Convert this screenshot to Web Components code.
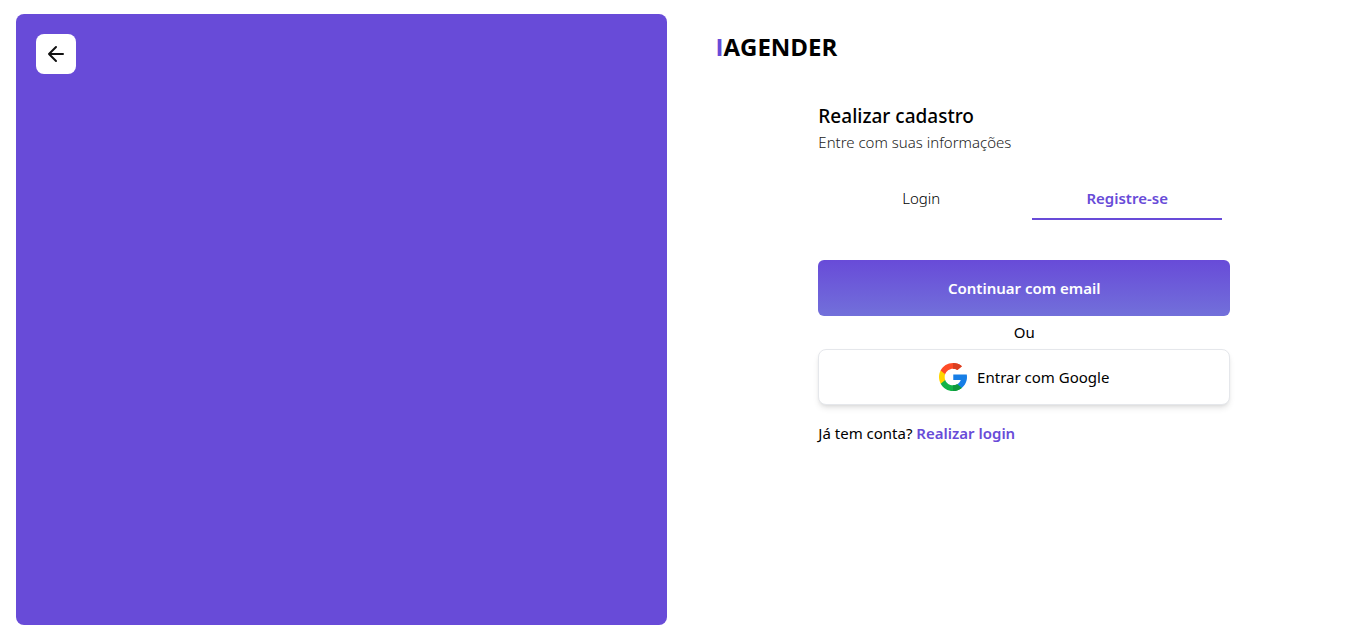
<!DOCTYPE html>
<html lang="pt-BR">
<head>
<meta charset="utf-8">
<meta name="viewport" content="width=device-width, initial-scale=1">
<title>IAGENDER</title>
<style>
  :root { --brand: #684bd8; --brand-soft: #7270da; }
  body { margin: 0; background: #fff; color: #000; font: 400 15px/24px "Segoe UI", "Noto Sans", "Open Sans", sans-serif; }
</style>
</head>
<body>
<auth-page>
  <back-button slot="cover"></back-button>
  <brand-logo slot="header" initial="I">AGENDER</brand-logo>
  <auth-form></auth-form>
</auth-page>

<template id="auth-page">
  <style>
    :host { display: grid; grid-template-columns: 1fr 1fr; min-height: 100vh; }
    .cover { margin: 14px 16px 11px; padding: 20px; border-radius: 8px; background: var(--brand); }
    main { padding: 31px 24px 32px 25px; }
    header { padding-left: 8px; margin-bottom: 40px; }
  </style>
  <aside class="cover"><slot name="cover"></slot></aside>
  <main>
    <header><slot name="header"></slot></header>
    <slot></slot>
  </main>
</template>

<template id="back-button">
  <style>
    :host { display: block; }
    button { display: flex; align-items: center; justify-content: center; width: 40px; height: 40px; padding: 0; border: 0; border-radius: 8px; background: #fff; color: #111; cursor: pointer; }
  </style>
  <button type="button" aria-label="Voltar">
    <svg width="24" height="24" viewBox="0 0 24 24" fill="none" stroke="currentColor" stroke-width="2" stroke-linecap="round" stroke-linejoin="round" aria-hidden="true"><path d="M19 12H5M12 19l-7-7 7-7"/></svg>
  </button>
</template>

<template id="brand-logo">
  <style>
    :host { display: block; font-family: "Segoe UI", "Open Sans", sans-serif; font-size: 24px; line-height: 32px; font-weight: 700; }
    span { color: var(--brand); }
  </style>
  <span></span><slot></slot>
</template>

<template id="auth-form">
  <style>
    :host { display: block; width: 65%; margin: 0 auto; }
    h1 { margin: 0; font-size: 19px; line-height: 27px; font-weight: 500; }
    .hint { margin: 0; font-weight: 300; color: #222; }
    nav { display: grid; grid-template-columns: 1fr 1fr; gap: 16px; padding: 24px 8px 40px; }
    .actions { display: flex; flex-direction: column; gap: 4px; }
    .or { margin: 0; text-align: center; line-height: 25px; }
    .foot { margin: 16px 0 0; }
    .foot a { color: var(--brand); font-weight: 600; text-decoration: none; }
  </style>
  <h1>Realizar cadastro</h1>
  <p class="hint">Entre com suas informações</p>
  <nav>
    <auth-tab>Login</auth-tab>
    <auth-tab active>Registre-se</auth-tab>
  </nav>
  <div class="actions">
    <action-button primary>Continuar com email</action-button>
    <p class="or">Ou</p>
    <action-button><google-icon slot="icon"></google-icon>Entrar com Google</action-button>
  </div>
  <p class="foot">Já tem conta? <a href="#login">Realizar login</a></p>
</template>

<template id="auth-tab">
  <style>
    :host { display: block; }
    button { display: block; width: 100%; padding: 8px; border: 0; border-bottom: 2px solid transparent; background: none; color: #000; font: inherit; font-weight: 300; cursor: pointer; }
    :host([active]) button { border-color: var(--brand); color: var(--brand); font-weight: 600; }
  </style>
  <button type="button"><slot></slot></button>
</template>

<template id="action-button">
  <style>
    :host { display: block; }
    button { display: flex; align-items: center; justify-content: center; gap: 10px; box-sizing: border-box; width: 100%; height: 56px; border: 1px solid #e5e7eb; border-radius: 8px; background: #fff; color: #000; font: inherit; box-shadow: 0 4px 6px -1px rgb(0 0 0 / .1), 0 2px 4px -2px rgb(0 0 0 / .1); cursor: pointer; }
    :host([primary]) button { border: 0; border-radius: 6px; background: linear-gradient(var(--brand), var(--brand-soft)); color: #fff; font-weight: 600; box-shadow: none; }
  </style>
  <button type="button"><slot name="icon"></slot><slot></slot></button>
</template>

<template id="google-icon">
  <style>:host { display: block; } svg { display: block; }</style>
  <svg width="28" height="28" viewBox="0 0 512 512" aria-hidden="true">
    <defs><clipPath id="right"><path d="M256 0h256v512H256z"/></clipPath></defs>
    <path fill="#ffd500" d="M113.47 309.408 95.648 375.94l-65.139 1.378C11.042 341.211 0 299.9 0 256c0-42.451 10.324-82.483 28.624-117.732l58.006 10.632 25.404 57.644c-5.317 15.501-8.215 32.141-8.215 49.456 0 18.792 3.406 36.797 9.651 53.408z"/>
    <path fill="#167ee6" d="M507.527 208.176C510.467 223.662 512 239.655 512 256c0 18.328-1.927 36.206-5.598 53.451-12.462 58.683-45.025 109.925-90.134 146.187l-73.058-3.741-10.338-64.535c29.932-17.554 53.324-45.025 65.646-77.911H261V208.176z"/>
    <path fill="#12b347" d="M416.267 455.638C372.396 490.901 316.666 512 256 512c-97.491 0-182.252-54.491-225.491-134.681l82.961-67.91c21.619 57.698 77.278 98.771 142.53 98.771 28.047 0 54.323-7.582 76.87-20.818z"/>
    <path fill="#0f993e" clip-path="url(#right)" d="M416.267 455.638C372.396 490.901 316.666 512 256 512c-97.491 0-182.252-54.491-225.491-134.681l82.961-67.91c21.619 57.698 77.278 98.771 142.53 98.771 28.047 0 54.323-7.582 76.87-20.818z"/>
    <path fill="#ff4b26" d="m419.404 58.936-82.933 67.896c-23.335-14.586-50.919-23.012-80.471-23.012-66.729 0-123.429 42.957-143.965 102.724l-83.411-68.276C71.23 56.123 157.06 0 256 0c62.115 0 119.068 22.126 163.404 58.936z"/>
    <path fill="#d93f21" clip-path="url(#right)" d="m419.404 58.936-82.933 67.896c-23.335-14.586-50.919-23.012-80.471-23.012-66.729 0-123.429 42.957-143.965 102.724l-83.411-68.276C71.23 56.123 157.06 0 256 0c62.115 0 119.068 22.126 163.404 58.936z"/>
  </svg>
</template>

<script>
  class TemplateElement extends HTMLElement {
    constructor() {
      super();
      const template = document.getElementById(this.localName);
      this.attachShadow({ mode: "open" }).append(template.content.cloneNode(true));
    }
  }
  class BrandLogo extends TemplateElement {
    connectedCallback() {
      this.shadowRoot.querySelector("span").textContent = this.getAttribute("initial");
    }
  }
  customElements.define("google-icon", class extends TemplateElement {});
  customElements.define("action-button", class extends TemplateElement {});
  customElements.define("auth-tab", class extends TemplateElement {});
  customElements.define("back-button", class extends TemplateElement {});
  customElements.define("brand-logo", BrandLogo);
  customElements.define("auth-form", class extends TemplateElement {});
  customElements.define("auth-page", class extends TemplateElement {});
</script>
</body>
</html>
